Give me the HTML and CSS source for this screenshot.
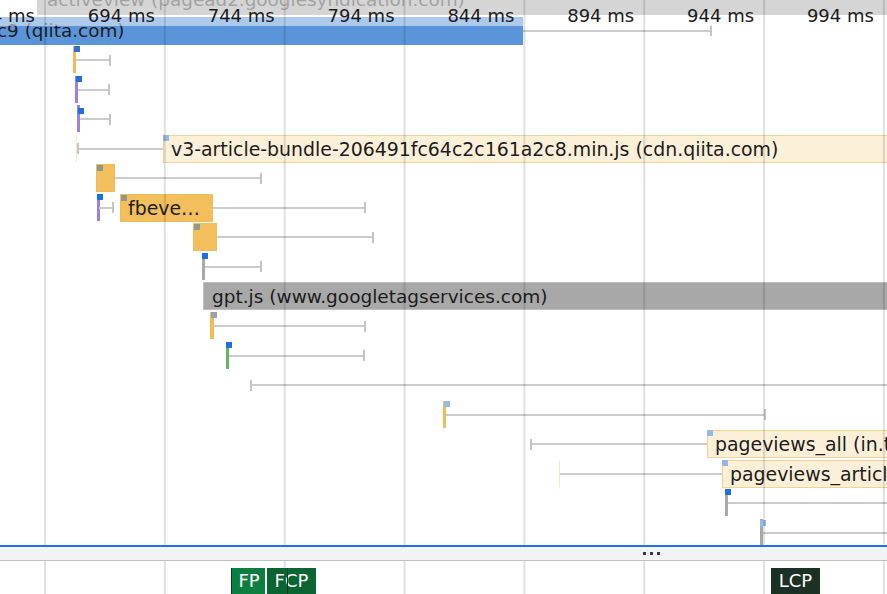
FILE: index.html
```html
<!DOCTYPE html>
<html>
<head>
<meta charset="utf-8">
<link rel="stylesheet" href="styles.css">
</head>
<body>
<div class="panel">
  <div class="timeline">
    <div class="rows">
      <div class="row">
        <div class="bar grey-dim" style="left:37px;width:860px">activeview (pagead2.googlesyndication.com)</div>
      </div>
      <div class="row">
        <div class="bar blue" style="left:0;width:523px"><span class="cut">c9 (qiita.com)</span></div>
        <span class="whisker rt" style="left:523px;width:189px"></span>
      </div>
      <div class="row">
        <span class="mark orange" style="left:73px"></span>
        <span class="sq mid" style="left:74px"></span>
        <span class="whisker rt" style="left:76px;width:35px"></span>
      </div>
      <div class="row">
        <span class="mark purple" style="left:75px"></span>
        <span class="sq" style="left:76px"></span>
        <span class="whisker rt" style="left:78px;width:32px"></span>
      </div>
      <div class="row">
        <span class="mark purple" style="left:77px"></span>
        <span class="sq" style="left:78px;top:3px"></span>
        <span class="whisker rt" style="left:80px;width:31px"></span>
      </div>
      <div class="row">
        <span class="faint" style="left:76px"></span>
        <span class="whisker lt" style="left:77px;width:86px"></span>
        <div class="bar beige" style="left:163px;width:740px">v3-article-bundle-206491fc64c2c161a2c8.min.js (cdn.qiita.com)</div>
        <span class="sq light" style="left:163px"></span>
      </div>
      <div class="row">
        <div class="bar orange-b" style="left:96px;width:19px"></div>
        <span class="sq olive" style="left:97px;top:1.5px"></span>
        <span class="whisker rt" style="left:115px;width:147px"></span>
      </div>
      <div class="row">
        <span class="mark purple" style="left:97px"></span>
        <span class="sq" style="left:97px"></span>
        <span class="whisker rt" style="left:99px;width:15px"></span>
        <div class="bar orange-b" style="left:120px;width:93px">fbeve…</div>
        <span class="sq olive" style="left:121px;top:1.5px"></span>
        <span class="whisker rt" style="left:213px;width:153px"></span>
      </div>
      <div class="row">
        <div class="bar orange-b" style="left:193px;width:24px"></div>
        <span class="sq olive" style="left:194px;top:1.5px"></span>
        <span class="whisker rt" style="left:217px;width:157px"></span>
      </div>
      <div class="row">
        <span class="mark grey" style="left:202px"></span>
        <span class="sq" style="left:202px"></span>
        <span class="whisker rt" style="left:205px;width:57px"></span>
      </div>
      <div class="row">
        <div class="bar grey-b" style="left:203px;width:700px">gpt.js (www.googletagservices.com)</div>
      </div>
      <div class="row">
        <span class="mark orange wide" style="left:210px"></span>
        <span class="sq slate" style="left:211px"></span>
        <span class="whisker rt" style="left:214px;width:152px"></span>
      </div>
      <div class="row">
        <span class="mark green" style="left:226px"></span>
        <span class="sq" style="left:226px"></span>
        <span class="whisker rt" style="left:229px;width:136px"></span>
      </div>
      <div class="row">
        <span class="whisker lt" style="left:250px;width:660px"></span>
      </div>
      <div class="row">
        <span class="mark orange" style="left:443px"></span>
        <span class="sq light" style="left:444px"></span>
        <span class="whisker rt" style="left:446px;width:320px"></span>
      </div>
      <div class="row">
        <span class="whisker lt" style="left:530px;width:177px"></span>
        <div class="bar beige" style="left:707px;width:200px">pageviews_all (in.treasuredata.com)</div>
        <span class="sq light" style="left:707px"></span>
      </div>
      <div class="row">
        <span class="faint" style="left:559px"></span>
        <span class="whisker" style="left:560px;width:162px"></span>
        <div class="bar beige" style="left:722px;width:200px">pageviews_article (in.treasuredata.com)</div>
        <span class="sq light" style="left:722px"></span>
      </div>
      <div class="row">
        <span class="mark grey" style="left:725px"></span>
        <span class="sq" style="left:725px"></span>
        <span class="whisker" style="left:728px;width:180px"></span>
      </div>
      <div class="row">
        <span class="mark grey" style="left:760px"></span>
        <span class="sq light" style="left:760px;top:1.5px"></span>
        <span class="whisker" style="left:763px;width:150px"></span>
      </div>
    </div>
    <div class="header">
      <div class="tick-label">644 ms</div>
      <div class="tick-label">694 ms</div>
      <div class="tick-label">744 ms</div>
      <div class="tick-label">794 ms</div>
      <div class="tick-label">844 ms</div>
      <div class="tick-label">894 ms</div>
      <div class="tick-label">944 ms</div>
      <div class="tick-label">994 ms</div>
    </div>
    <div class="gridlines"></div>
  </div>
  <div class="divider">
    <span class="dot"></span><span class="dot"></span><span class="dot"></span>
  </div>
  <div class="markers">
    <div class="gridlines"></div>
    <div class="marker fp" style="left:231px;width:34px">FP</div>
    <div class="marker fcp" style="left:267px;width:49px">FCP</div>
    <span class="marker-line" style="left:287px"></span>
    <div class="marker lcp" style="left:771px;width:49px">LCP</div>
  </div>
</div>
</body>
</html>
```

FILE: styles.css
```css
html, body {
  margin: 0;
  padding: 0;
  background: #ffffff;
  overflow: hidden;
}

body {
  width: 887px;
  height: 594px;
  font-family: "DejaVu Sans", "Liberation Sans", sans-serif;
  color: #1c1c1c;
}

.panel {
  width: 887px;
  height: 594px;
  display: flex;
  flex-direction: column;
  overflow: hidden;
}

.timeline {
  position: relative;
  height: 545px;
  flex: 0 0 545px;
  overflow: hidden;
}

.rows {
  display: flex;
  flex-direction: column;
  margin-top: -13.5px;
}

.row {
  position: relative;
  height: 29.55px;
  flex: 0 0 29.55px;
}

.bar {
  position: absolute;
  top: 0.5px;
  height: 28px;
  box-sizing: border-box;
  white-space: nowrap;
  overflow: hidden;
  font-size: 18.9px;
  line-height: 27px;
  padding-left: 7px;
  color: #1c1c1c;
}

.bar.blue {
  background: #5a95d9;
  padding-left: 0;
  line-height: 27px;
  font-size: 18.4px;
}

.cut {
  margin-left: -3px;
}

.bar.grey-dim {
  background: #aaaaaa;
  color: #444444;
  padding-left: 10px;
  line-height: 25px;
  font-size: 18.4px;
}

.bar.beige {
  background: #fdf0d9;
  border: 1px solid #f4d295;
}

.bar.orange-b {
  background: #f3be5c;
  border: 1px solid #f1bb58;
  padding-left: 7px;
}

.bar.grey-b {
  background: #a8a8a8;
  border: 1px solid #bfbfbf;
  padding-left: 8px;
  font-size: 18.5px;
}

.mark {
  position: absolute;
  top: 0.5px;
  width: 3px;
  height: 27px;
}

.mark.wide { width: 4px; }
.mark.orange { background: #f2bb55; }
.mark.purple { background: #9c80e4; }
.mark.grey { background: #a8a8a8; }
.mark.green { background: #62b562; }

.sq {
  position: absolute;
  top: 0.5px;
  width: 6px;
  height: 6px;
  background: #1a6fe4;
}

.sq.mid { background: #2f72cf; }
.sq.light { background: #93b9e8; }
.sq.olive { background: #8d9a87; }
.sq.slate { background: #90a4b4; }

.faint {
  position: absolute;
  top: 0.5px;
  width: 1px;
  height: 27px;
  background: #f8e6c6;
}

.whisker {
  position: absolute;
  top: 13.5px;
  height: 2px;
  background: #cbcbcb;
}

.whisker.rt::after,
.whisker.lt::before {
  content: "";
  position: absolute;
  top: -4.5px;
  width: 2px;
  height: 11px;
  background: #c4c4c4;
}

.whisker.rt::after { right: 0; }
.whisker.lt::before { left: 0; }

.header {
  position: absolute;
  top: 0;
  left: 0;
  height: 26px;
  background: rgba(255, 255, 255, 0.5);
  display: flex;
  margin-left: -75.85px;
  width: 1100px;
}

.tick-label {
  flex: 0 0 119.85px;
  box-sizing: border-box;
  text-align: right;
  padding-right: 9px;
  padding-top: 2px;
  font-size: 18px;
  line-height: 28px;
  color: #1c1c1c;
  white-space: nowrap;
}

.gridlines {
  position: absolute;
  top: 0;
  bottom: 0;
  left: 43.5px;
  right: 0;
  background-image: linear-gradient(to right, rgba(0, 0, 0, 0.12) 0, rgba(0, 0, 0, 0.12) 1.5px, transparent 1.5px);
  background-size: 119.85px 100%;
  pointer-events: none;
}

.divider {
  flex: 0 0 13px;
  height: 13px;
  border-top: 2px solid #1a73e8;
  border-bottom: 1px solid #c2c2c2;
  background: #f1f3f4;
  display: flex;
  align-items: center;
  gap: 4px;
  padding-left: 643px;
}

.dot {
  width: 3px;
  height: 3px;
  background: #3c3c3c;
}

.markers {
  position: relative;
  flex: 1 1 auto;
  overflow: hidden;
}

.marker {
  position: absolute;
  top: 7px;
  height: 30px;
  box-sizing: border-box;
  color: #ffffff;
  font-size: 18px;
  line-height: 26px;
  text-align: center;
}

.marker.fp {
  background: #0b7f3f;
  border-left: 1px solid #04401e;
  padding-left: 1px;
}

.marker.fcp {
  background: #0a6533;
}

.marker.lcp {
  background: #1b3124;
}

.marker-line {
  position: absolute;
  top: 7px;
  bottom: 0;
  width: 1px;
  background: #053d1c;
}
```
